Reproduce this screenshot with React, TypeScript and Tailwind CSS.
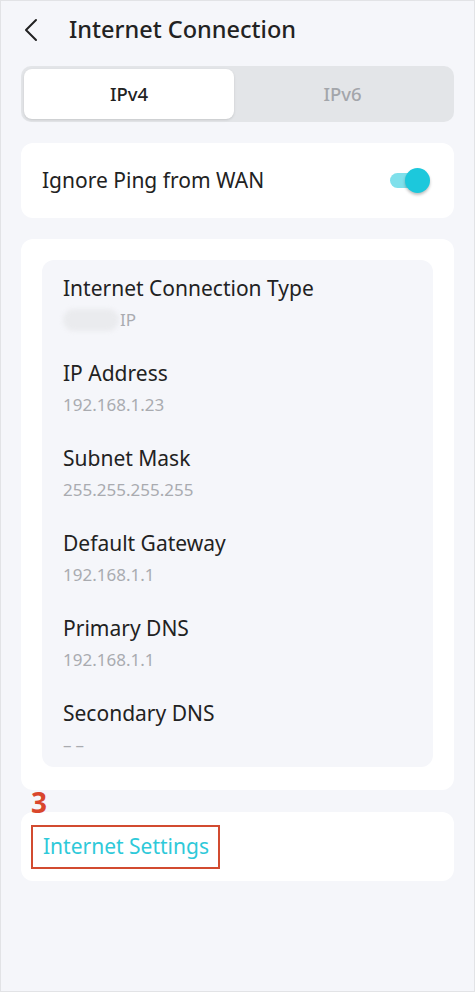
import { useState } from 'react'

const rows = [
  { label: 'Internet Connection Type', value: 'IP', redacted: true },
  { label: 'IP Address', value: '192.168.1.23' },
  { label: 'Subnet Mask', value: '255.255.255.255' },
  { label: 'Default Gateway', value: '192.168.1.1' },
  { label: 'Primary DNS', value: '192.168.1.1' },
  { label: 'Secondary DNS', value: '––', dashes: true },
]

export default function App() {
  const [tab, setTab] = useState<'v4' | 'v6'>('v4')
  const [ignorePing, setIgnorePing] = useState(true)

  return (
    <div
      className="min-h-[992px] w-[475px] bg-[#f5f6fa] border border-[#e2e3e6] text-[#222]"
      style={{ fontFamily: '"Noto Sans", Lato, sans-serif' }}
    >
      {/* header */}
      <div className="flex items-center h-[58px] pl-[22px]">
        <button className="w-[18px] h-[26px] flex items-center">
          <svg width="16" height="24" viewBox="0 0 16 24" fill="none">
            <path d="M13 2 L3 12 L13 22" stroke="#222" strokeWidth="2" strokeLinecap="round" strokeLinejoin="round" />
          </svg>
        </button>
        <h1 className="ml-[28px] text-[23.5px] font-medium">Internet Connection</h1>
      </div>

      <div className="px-[20px] flex flex-col">
        {/* segmented */}
        <div className="mt-[7px] h-[56px] rounded-[10px] bg-[#e3e5e8] p-[3px] flex">
          <button
            onClick={() => setTab('v4')}
            className={`w-[210px] rounded-[8px] text-[18.5px] font-medium ${tab === 'v4' ? 'bg-white text-[#222] shadow-sm' : 'text-[#a3a6ab]'}`}
          >
            IPv4
          </button>
          <button
            onClick={() => setTab('v6')}
            className={`flex-1 rounded-[8px] text-[18.5px] font-medium ${tab === 'v6' ? 'bg-white text-[#222] shadow-sm' : 'text-[#a3a6ab]'}`}
          >
            IPv6
          </button>
        </div>

        {/* ignore ping */}
        <div className="mt-[21px] h-[75px] bg-white rounded-[12px] flex items-center justify-between pl-[21px] pr-[24px]">
          <span className="text-[21px]">Ignore Ping from WAN</span>
          <button onClick={() => setIgnorePing(!ignorePing)} className="relative w-[40px] h-[26px] flex items-center">
            <span className={`w-[30px] h-[15px] rounded-full ${ignorePing ? 'bg-[#7fe0eb]' : 'bg-[#d5d7db]'}`} />
            <span
              className={`absolute top-[0px] w-[25px] h-[25px] rounded-full shadow-[0_2px_3px_rgba(0,0,0,0.25)] ${ignorePing ? 'left-[15px] bg-[#1cc8dc]' : 'left-0 bg-white'}`}
            />
          </button>
        </div>

        {/* details */}
        <div className="mt-[21px] bg-white rounded-[12px] pt-[21px] pb-[23px] px-[21px]">
          <div className="bg-[#f5f6fa] rounded-[12px] pl-[21px] pt-[14px] pb-[11px] flex flex-col gap-[28px]">
            {rows.map((r) => (
              <div key={r.label} className="flex flex-col">
                <span className="text-[21px] leading-[28px]">{r.label}</span>
                <span
                  className={`mt-[7px] h-[22px] text-[17px] leading-[22px] text-[#a9abb0] flex items-center ${r.dashes ? 'tracking-[4px]' : ''}`}
                >
                  {r.redacted && <span className="w-[56px] h-[22px] rounded-full bg-[#eaebee] blur-[2px] mr-[1px]" />}
                  {r.value}
                </span>
              </div>
            ))}
          </div>
        </div>

        {/* internet settings */}
        <div className="relative mt-[22px] h-[69px] bg-white rounded-[12px] flex items-center pl-[10px]">
          <span className="absolute left-[10px] top-[-24px] text-[28px] leading-[28px] font-bold text-[#d9462c]">3</span>
          <span className="border-2 border-[#d24b30] h-[44px] w-[189px] flex items-center pl-[10px] text-[21px] text-[#2ec9d9]">
            Internet Settings
          </span>
        </div>
      </div>
    </div>
  )
}
